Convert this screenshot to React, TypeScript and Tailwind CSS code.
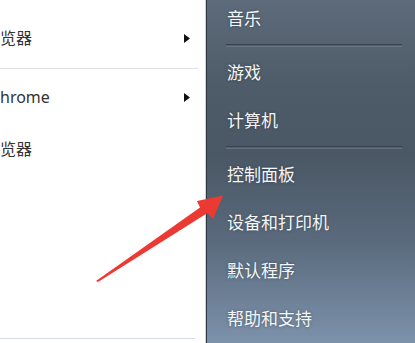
const FONT = '"Noto Sans", "Noto Sans CJK SC", sans-serif';

type LeftItem = { label: string; submenu?: boolean; h: string };

const LEFT_TOP: LeftItem = { label: '览器', submenu: true, h: 'h-[40px]' };
const LEFT_REST: LeftItem[] = [
  { label: 'hrome', submenu: true, h: 'h-[56px]' },
  { label: '览器', h: 'h-[48px]' },
];

const RIGHT_GROUPS: string[][] = [
  ['音乐'],
  ['游戏', '计算机'],
  ['控制面板', '设备和打印机', '默认程序', '帮助和支持'],
];

// tiny black submenu triangle, like the Win7 start menu
function SubArrow() {
  return (
    <svg width="6" height="9" viewBox="0 0 6 9" className="shrink-0">
      <path d="M0 0 L6 4.5 L0 9 Z" fill="#111" />
    </svg>
  );
}

function LeftRow({ item }: { item: LeftItem }) {
  return (
    <div className={`flex items-center justify-between pr-[15px] ${item.h}`}>
      <span className="text-[16px] text-[#333] leading-none">{item.label}</span>
      {item.submenu && <SubArrow />}
    </div>
  );
}

function Separator() {
  return (
    <div className="ml-[19px] mr-[13px] flex flex-col h-[6px] justify-center">
      <div className="h-px bg-[#39434f]" />
      <div className="h-px bg-[#53606d]" />
      <div className="h-px bg-[#6e7b8a] opacity-70" />
    </div>
  );
}

export default function App() {
  return (
    <div
      className="relative w-[415px] h-[343px] overflow-hidden flex bg-white"
      style={{ fontFamily: FONT }}
    >
      {/* left: program list */}
      <div className="w-[206px] h-full flex flex-col bg-white border-r border-[#cfd3d8]">
        <div className="pt-[18px]">
          <LeftRow item={LEFT_TOP} />
        </div>
        <div className="mt-[10px] mr-[7px] h-px bg-[#dde1e6]" />
        {LEFT_REST.map((it, i) => (
          <LeftRow key={i} item={it} />
        ))}
        <div className="flex-1" />
        <div className="mb-[4px] mr-[10px] h-px bg-[#d6dce4]" />
      </div>

      {/* right: shortcut column */}
      <div className="flex-1 h-full border-l border-[#2e3944] bg-[linear-gradient(180deg,#5d6b7a_0%,#4e5b69_25%,#4a5765_45%,#5a6a7c_70%,#7c92ab_100%)]">
        <div className="-mt-[6px] flex flex-col">
          {RIGHT_GROUPS.map((group, gi) => (
            <div key={gi} className="flex flex-col">
              {gi > 0 && <Separator />}
              {group.map((label) => (
                <div
                  key={label}
                  className="h-[48px] flex items-center pl-[20px] text-[17px] leading-none text-[#f4f6f8] [text-shadow:0_0_3px_rgba(20,30,40,0.45)]"
                >
                  {label}
                </div>
              ))}
            </div>
          ))}
        </div>
      </div>

      {/* red pointer arrow drawn over the menu */}
      <svg
        className="absolute inset-0 pointer-events-none"
        width="415"
        height="343"
        viewBox="0 0 415 343"
      >
        <path
          d="M96 281 L200 207.5 L197 201 L223 195.5 L213 219 L207.5 213 L98 282 Z"
          fill="#ec3a33"
        />
      </svg>
    </div>
  );
}
